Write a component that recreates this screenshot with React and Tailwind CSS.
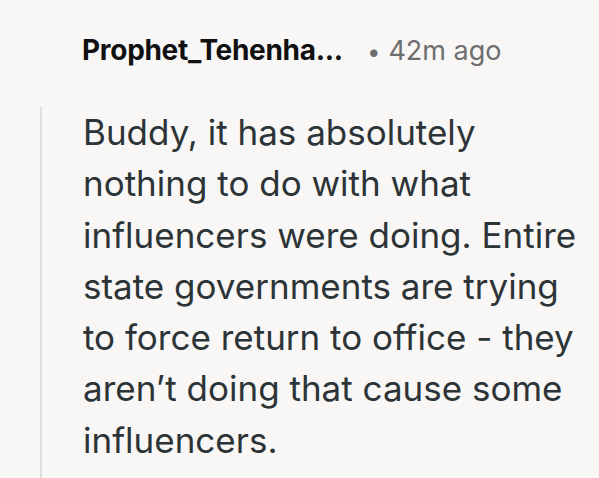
const lines = [
  'Buddy, it has absolutely',
  'nothing to do with what',
  'influencers were doing. Entire',
  'state governments are trying',
  'to force return to office - they',
  'aren\u2019t doing that cause some',
  'influencers.',
]

export default function App() {
  return (
    <div className="h-[478px] w-[599px] overflow-hidden bg-[#f8f7f6] font-['Inter',sans-serif]">
      <div className="flex items-baseline pl-[82px] pt-[32px]">
        <span className="text-[28px] font-bold leading-[36px] tracking-[-0.3px] text-[#111111]">Prophet_Tehenha...</span>
        <span className="ml-[24px] text-[24px] leading-[36px] text-[#6e6e6e]">•</span>
        <span className="ml-[8px] text-[27px] leading-[36px] text-[#6e6e6e]">42m ago</span>
      </div>
      <div className="ml-[40px] mt-[37px] h-[400px] border-l-[2px] border-[#dedede] pl-[41px]">
        {lines.map((l) => (
          <div key={l} className="whitespace-nowrap text-[35px] leading-[51.3px] text-[#2d3437]">
            {l}
          </div>
        ))}
      </div>
    </div>
  )
}
